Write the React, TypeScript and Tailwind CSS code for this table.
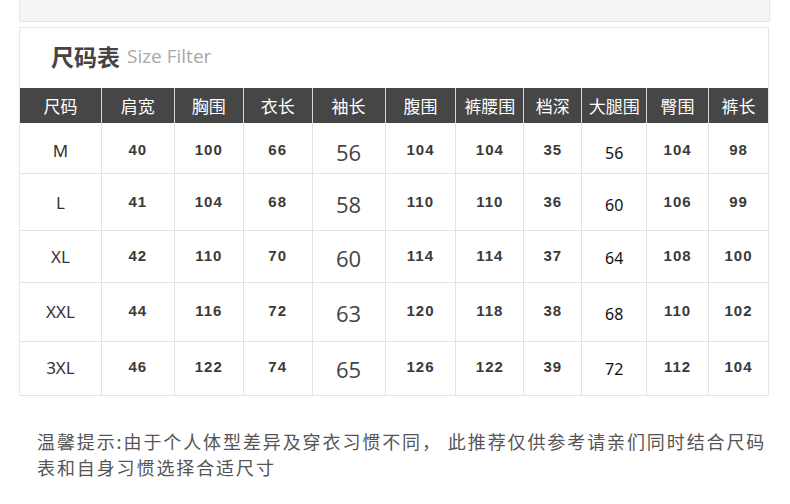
import React from "react";

const colW = [
  "w-[81px]",
  "w-[73px]",
  "w-[69px]",
  "w-[69px]",
  "w-[73px]",
  "w-[71px]",
  "w-[68px]",
  "w-[58px]",
  "w-[65px]",
  "w-[62px]",
  "w-[60px]",
];
const heads = ["尺码", "肩宽", "胸围", "衣长", "袖长", "腹围", "裤腰围", "档深", "大腿围", "臀围", "裤长"];
const rows: { h: string; pad: string; cells: string[] }[] = [
  { h: "h-[51px]", pad: "mt-[6px]", cells: ["M", "40", "100", "66", "56", "104", "104", "35", "56", "104", "98"] },
  { h: "h-[57px]", pad: "mt-[2px]", cells: ["L", "41", "104", "68", "58", "110", "110", "36", "60", "106", "99"] },
  { h: "h-[52px]", pad: "", cells: ["XL", "42", "110", "70", "60", "114", "114", "37", "64", "108", "100"] },
  { h: "h-[59px]", pad: "", cells: ["XXL", "44", "116", "72", "63", "120", "118", "38", "68", "110", "102"] },
  { h: "h-[54px]", pad: "-mt-[2px]", cells: ["3XL", "46", "122", "74", "65", "126", "122", "39", "72", "112", "104"] },
];

const cjk = "font-['Noto_Sans_CJK_SC','Noto_Sans',sans-serif]";

function cellClass(ci: number) {
  if (ci === 0) return "font-['Noto_Sans',sans-serif] text-[17px] text-[#333]";
  if (ci === 4) return "font-['Open_Sans',sans-serif] text-[22px] text-[#444] pt-[3px]";
  if (ci === 8) return "font-['Noto_Sans',sans-serif] text-[16px] text-[#111] pt-[3px]";
  return "font-['Liberation_Sans',sans-serif] text-[15px] font-bold text-[#3a3a3a] tracking-[1px] pb-[1px]";
}

export default function App() {
  return (
    <div className="w-[790px] h-[504px] bg-white overflow-hidden">
      <div className="ml-[19px] w-[751px] h-[22px] bg-[#f5f5f5] border-b border-x border-[#e6e6e6]" />
      <div className="ml-[19px] mt-[5px] w-[750px] border-x border-t border-[#e8e8e8]">
        <div className="h-[60px] flex items-center pl-[31px] pb-[3px]">
          <span className={`text-[23px] font-bold text-[#444] leading-none ${cjk}`}>尺码表</span>
          <span className="ml-[7px] text-[19px] text-[#a8a8a8] leading-none font-['Open_Sans',sans-serif]">
            Size Filter
          </span>
        </div>
        <div className="flex bg-[#464646] h-[35px]">
          {heads.map((h, i) => (
            <div
              key={i}
              className={`${colW[i]} ${cjk} flex items-center justify-center text-white text-[17px] ${
                i > 0 ? "border-l border-[#d8d8d8]" : ""
              }`}
            >
              {h}
            </div>
          ))}
        </div>
        {rows.map((r, ri) => (
          <div key={ri} className={`${r.h} flex border-b border-[#e3e3e3]`}>
            {r.cells.map((c, ci) => (
              <div
                key={ci}
                className={`${colW[ci]} flex items-center justify-center ${
                  ci > 0 ? "border-l border-[#e3e3e3]" : ""
                } ${cellClass(ci)}`}
              >
                <span className={r.pad}>{c}</span>
              </div>
            ))}
          </div>
        ))}
      </div>
      <div className={`ml-[37px] mt-[32px] w-[745px] text-[18px] leading-[26px] tracking-[1.9px] text-[#555] ${cjk}`}>
        温馨提示:由于个人体型差异及穿衣习惯不同，&nbsp;此推荐仅供参考请亲们同时结合尺码
        <br />
        表和自身习惯选择合适尺寸
      </div>
    </div>
  );
}
